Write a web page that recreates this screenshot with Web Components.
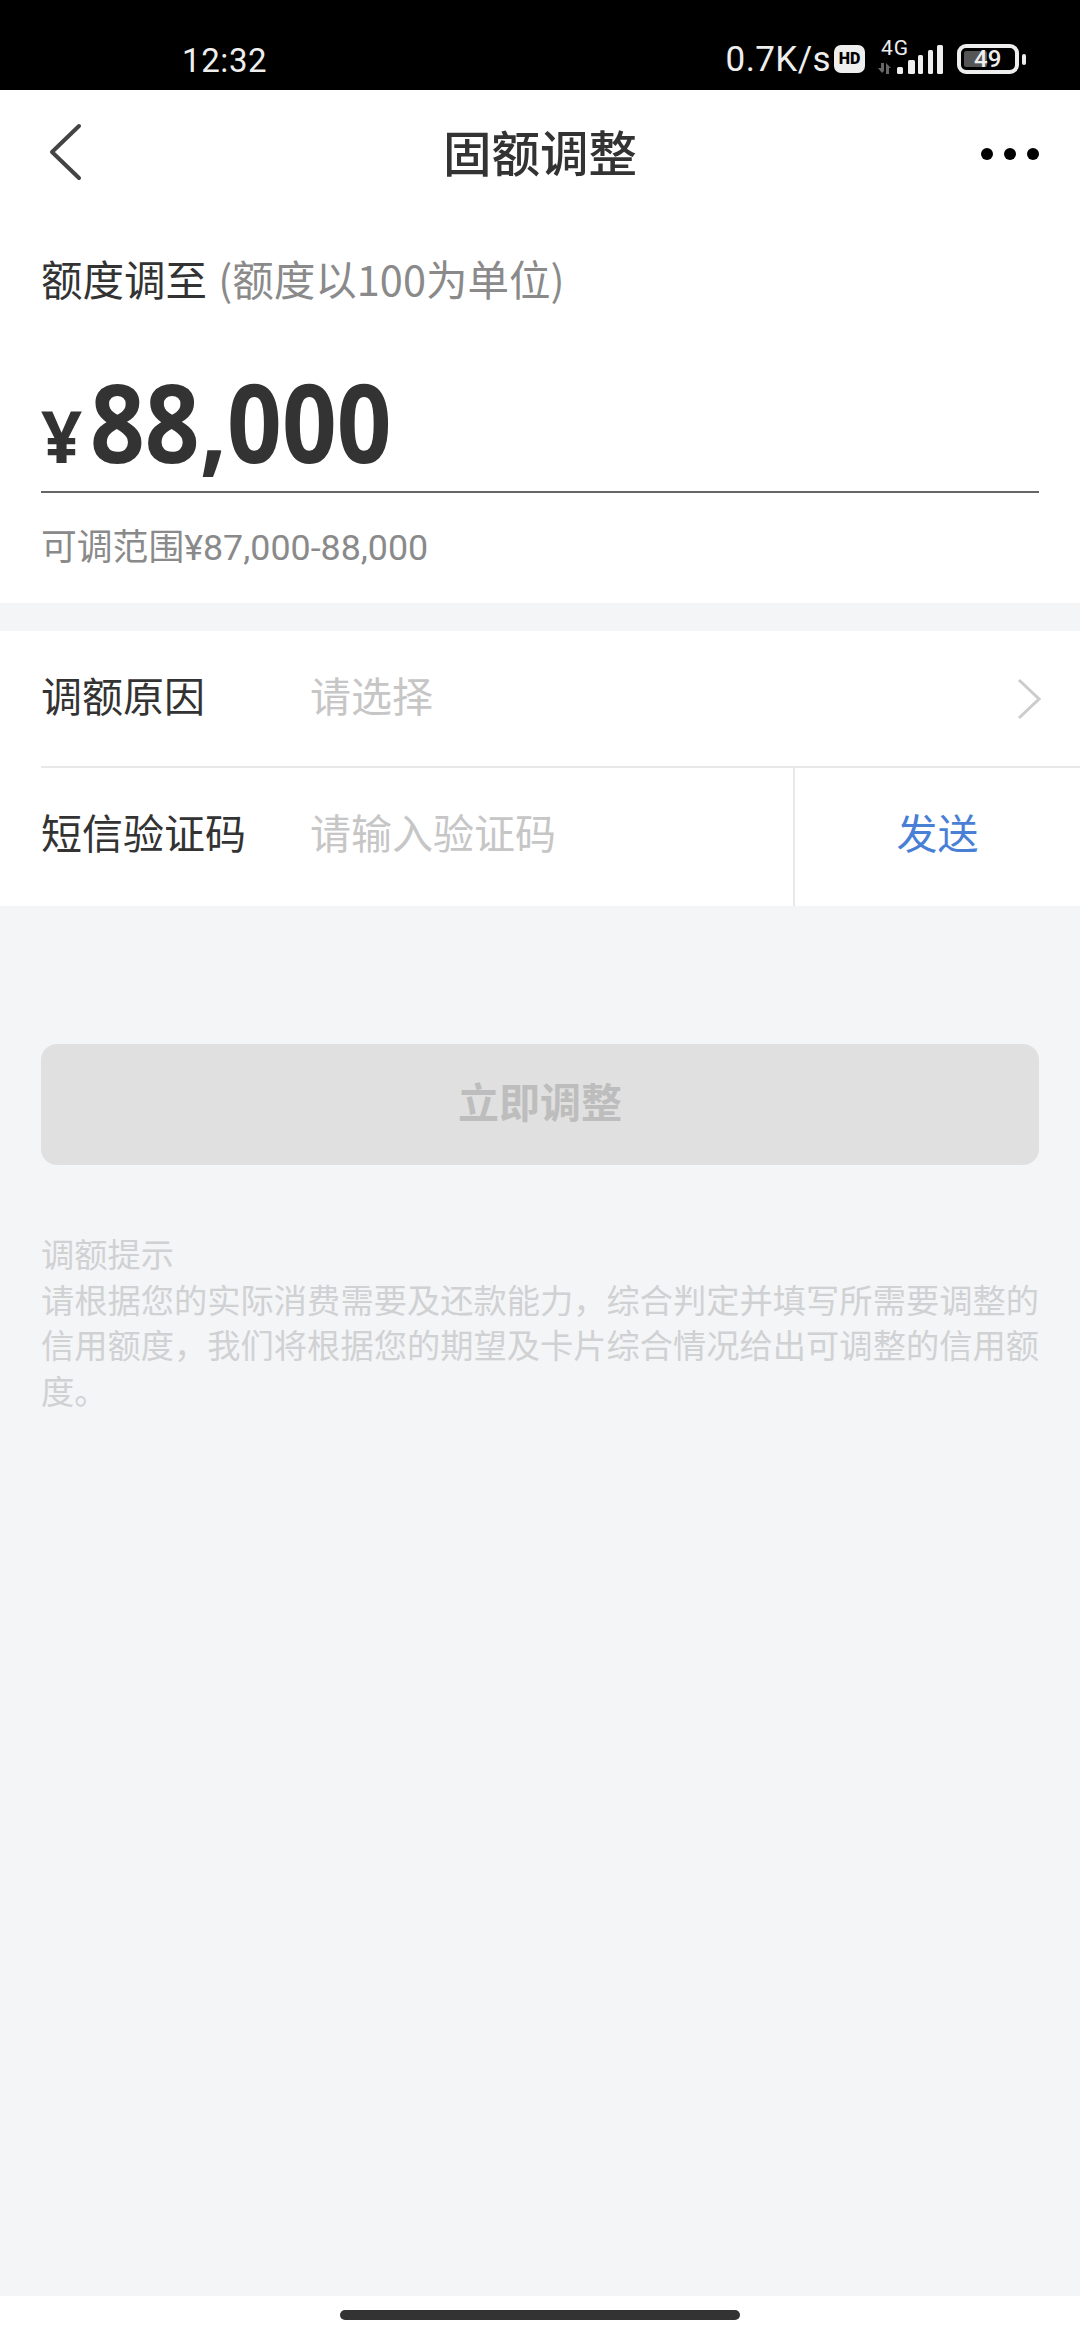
<!DOCTYPE html>
<html lang="zh">
<head>
<meta charset="utf-8">
<title>固额调整</title>
<style>
	html, body { margin: 0; padding: 0; }
	body {
		width: 1080px;
		height: 2340px;
		background: #f4f5f7;
		display: flex;
		flex-direction: column;
		overflow: hidden;
		font-family: "Noto Sans CJK SC", "Noto Sans", sans-serif;
	}
	.rows { display: block; background: #fff; margin-top: 28px; }
	hint-block { flex: 1; }
</style>
</head>
<body>
<status-bar></status-bar>
<nav-bar>固额调整</nav-bar>
<amount-panel value="88,000" range="可调范围¥87,000-88,000"></amount-panel>
<div class="rows">
	<form-row label="调额原因" placeholder="请选择" chevron divided></form-row>
	<form-row label="短信验证码" placeholder="请输入验证码" action="发送" shift="13"></form-row>
</div>
<submit-button>立即调整</submit-button>
<hint-block title="调额提示">请根据您的实际消费需要及还款能力，综合判定并填写所需要调整的信用额度，我们将根据您的期望及卡片综合情况给出可调整的信用额度。</hint-block>
<home-bar></home-bar>

<script>
class StatusBar extends HTMLElement {
	constructor() {
		super();
		this.attachShadow({ mode: "open" });
	}
	connectedCallback() {
		this.shadowRoot.innerHTML = `
		<style>
			:host {
				display: flex;
				align-items: center;
				height: 90px;
				padding: 0 54px 0 182px;
				box-sizing: border-box;
				background: #000;
				color: #eee;
				font-family: Roboto, sans-serif;
			}
			.time { font-size: 33px; letter-spacing: .6px; flex: 1; margin-top: 30px; }
			.right { display: flex; align-items: center; margin-top: 28px; }
			.speed { font-size: 35px; letter-spacing: .4px; }
			.hd {
				width: 31px; height: 28px; margin-left: 3px;
				background: #eee; color: #000; border-radius: 7px;
				font: 900 16px/28px Roboto, sans-serif; text-align: center;
			}
			.net { position: relative; width: 68px; height: 40px; margin-left: 11px; }
			.net span { position: absolute; left: 5px; top: -1px; font-size: 21px; line-height: 20px; letter-spacing: 1px; }
			.net svg { position: absolute; left: 0; top: 0; }
			.bat {
				position: relative; width: 62px; height: 30px; margin-left: 13px;
				box-sizing: border-box; border: 4px solid #eee; border-radius: 9px;
				font-size: 24px; line-height: 22px; font-weight: 500; color: #eee;
			}
			.bat i { position: absolute; left: 3px; top: 3px; bottom: 3px; width: 23px; background: #555; border-radius: 2px; }
			.bat b { position: absolute; left: 13px; top: 0; font-weight: 500; }
			.nub { width: 4px; height: 11px; margin-left: 3px; background: #eee; border-radius: 2px; }
		</style>
		<div class="time">12:32</div>
		<div class="right">
			<div class="speed">0.7K/s</div>
			<div class="hd">HD</div>
			<div class="net">
				<span>4G</span>
				<svg width="68" height="40" viewBox="0 0 68 40">
					<path d="M8 24h-3v5H2l4 5 2-2zM10 24l5 5h-2v6h-3z" fill="#666"/>
					<rect x="21" y="28" width="6" height="7" rx="1.5" fill="#eee"/>
					<rect x="32" y="21" width="7" height="14" rx="1.5" fill="#eee"/>
					<rect x="42" y="16" width="5" height="19" rx="1.5" fill="#eee"/>
					<rect x="52" y="11" width="5" height="24" rx="1.5" fill="#eee"/>
					<rect x="61" y="6" width="6" height="29" rx="1.5" fill="#eee"/>
				</svg>
			</div>
			<div class="bat"><i></i><b>49</b></div>
			<div class="nub"></div>
		</div>`;
	}
}
customElements.define("status-bar", StatusBar);

class NavBar extends HTMLElement {
	constructor() {
		super();
		this.attachShadow({ mode: "open" });
	}
	connectedCallback() {
		this.shadowRoot.innerHTML = `
		<style>
			:host {
				display: grid;
				grid-template-columns: 1fr auto 1fr;
				align-items: center;
				height: 130px;
				padding: 0 41px;
				background: #fff;
				color: #333;
			}
			.title { font-size: 48.5px; font-weight: 500; line-height: 60px; padding-bottom: 8px; }
			.more { justify-self: end; display: flex; gap: 11px; margin-top: -3px; }
			.more i { width: 12px; height: 12px; border-radius: 50%; background: #000; }
			svg { display: block; margin: -6px 0 0 6px; }
		</style>
		<svg width="36" height="58" viewBox="0 0 36 58"><path d="M32 3L5 29l27 26" fill="none" stroke="#444" stroke-width="4" stroke-linecap="round" stroke-linejoin="round"/></svg>
		<div class="title"><slot></slot></div>
		<div class="more"><i></i><i></i><i></i></div>`;
	}
}
customElements.define("nav-bar", NavBar);

class AmountPanel extends HTMLElement {
	constructor() {
		super();
		this.attachShadow({ mode: "open" });
	}
	connectedCallback() {
		this.shadowRoot.innerHTML = `
		<style>
			:host {
				display: block;
				height: 383px;
				padding: 30px 41px 0;
				box-sizing: border-box;
				background: #fff;
			}
			.label { font-size: 41.5px; line-height: 56px; color: #333; }
			.label span { color: #8a8a8a; margin-left: 2px; }
			.amount {
				display: flex;
				align-items: baseline;
				height: 187px;
				padding-top: 40px;
				box-sizing: border-box;
				border-bottom: 2px solid #666;
				color: #333;
				font-family: "Noto Sans", sans-serif;
				font-weight: 700;
				line-height: 150px;
			}
			.cur { font-size: 72px; margin-right: 8px; }
			.val { display: inline-block; font-size: 109px; transform: scaleX(.88); transform-origin: left; }
			.range {
				margin-top: 30px;
				font-size: 35.8px;
				line-height: 50px;
				color: #8a8a8a;
				font-family: Roboto, "Noto Sans CJK SC", sans-serif;
			}
		</style>
		<div class="label">额度调至 <span>(额度以100为单位)</span></div>
		<div class="amount"><span class="cur">¥</span><span class="val">${this.getAttribute("value")}</span></div>
		<div class="range">${this.getAttribute("range")}</div>`;
	}
}
customElements.define("amount-panel", AmountPanel);

class FormRow extends HTMLElement {
	constructor() {
		super();
		this.attachShadow({ mode: "open" });
	}
	connectedCallback() {
		const action = this.getAttribute("action");
		const chevron = this.hasAttribute("chevron");
		const divided = this.hasAttribute("divided");
		const shift = this.getAttribute("shift") || 9;
		this.shadowRoot.innerHTML = `
		<style>
			:host {
				display: flex;
				align-items: stretch;
				height: ${divided ? 137 : 138}px;
				margin-left: 41px;
				box-sizing: border-box;
				border-bottom: ${divided ? "2px solid #e8e8e8" : "none"};
				font-size: 41px;
			}
			.label { width: 269px; color: #333; align-self: center; padding-bottom: ${shift}px; }
			.ph { flex: 1; color: #c6c6c6; align-self: center; padding-bottom: ${shift}px; }
			.chev { align-self: center; margin-right: 39px; display: block; }
			.action {
				width: 287px;
				box-sizing: border-box;
				border-left: 2px solid #e8e8e8;
				padding-bottom: ${shift}px;
				display: flex;
				align-items: center;
				justify-content: center;
				color: #4a7fd6;
			}
		</style>
		<div class="label">${this.getAttribute("label")}</div>
		<div class="ph">${this.getAttribute("placeholder")}</div>
		${chevron ? `<svg class="chev" width="24" height="42" viewBox="0 0 24 42"><path d="M2 2l20 19L2 40" fill="none" stroke="#ccc" stroke-width="3"/></svg>` : ""}
		${action ? `<div class="action">${action}</div>` : ""}`;
	}
}
customElements.define("form-row", FormRow);

class SubmitButton extends HTMLElement {
	constructor() {
		super();
		this.attachShadow({ mode: "open" });
	}
	connectedCallback() {
		this.shadowRoot.innerHTML = `
		<style>
			:host {
				display: flex;
				align-items: center;
				justify-content: center;
				height: 121px;
				margin: 138px 41px 0;
				padding-bottom: 9px;
				box-sizing: border-box;
				border-radius: 16px;
				background: #e0e0e0;
				color: #bdbdbd;
				font-size: 41px;
				font-weight: 700;
			}
		</style>
		<slot></slot>`;
	}
}
customElements.define("submit-button", SubmitButton);

class HintBlock extends HTMLElement {
	constructor() {
		super();
		this.attachShadow({ mode: "open" });
	}
	connectedCallback() {
		this.shadowRoot.innerHTML = `
		<style>
			:host {
				display: block;
				margin: 65px 41px 0;
				color: #d0d1d3;
				font-size: 33.28px;
				line-height: 45.6px;
			}
		</style>
		<div>${this.getAttribute("title")}</div>
		<div><slot></slot></div>`;
	}
}
customElements.define("hint-block", HintBlock);

class HomeBar extends HTMLElement {
	constructor() {
		super();
		this.attachShadow({ mode: "open" });
	}
	connectedCallback() {
		this.shadowRoot.innerHTML = `
		<style>
			:host {
				display: flex;
				justify-content: center;
				height: 44px;
				padding-top: 14px;
				box-sizing: border-box;
				background: #fff;
			}
			i { width: 400px; height: 10px; border-radius: 5px; background: #333; }
		</style>
		<i></i>`;
	}
}
customElements.define("home-bar", HomeBar);
</script>
</body>
</html>
